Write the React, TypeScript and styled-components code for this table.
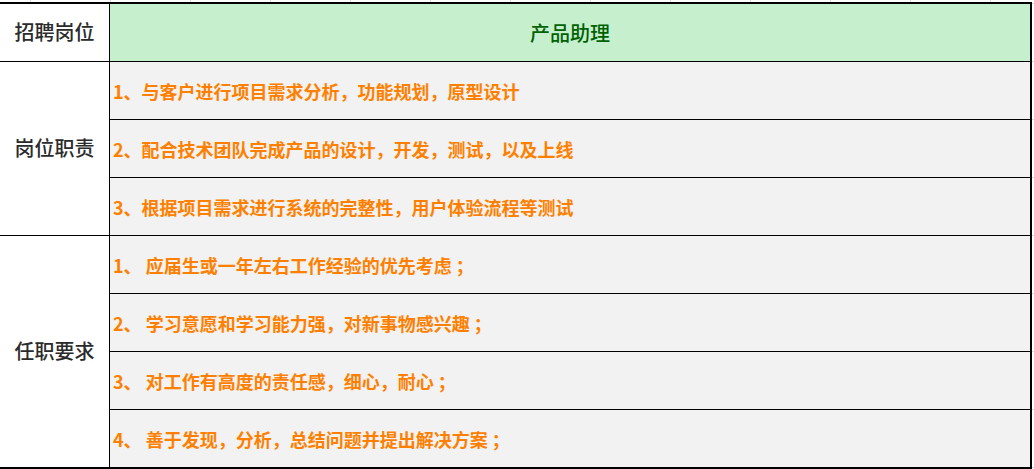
import React, { FC } from 'react'
import styled, { createGlobalStyle } from 'styled-components'

const GlobalStyle = createGlobalStyle`
  html, body {
    margin: 0;
    padding: 0;
  }
  body {
    width: 1034px;
    height: 469px;
    overflow: hidden;
    background-color: #fff;
    background-image:
      repeating-linear-gradient(to right, transparent 0 30px, #dadada 30px 31px, transparent 31px 80px),
      repeating-linear-gradient(to bottom, transparent 0 3px, #dadada 3px 4px, transparent 4px 58px);
  }
`

const Sheet = styled.div`
  margin-top: 2px;
  width: 1032px;
  box-sizing: border-box;
  border-top: 2px solid #000;
  border-right: 2px solid #000;
  border-bottom: 2px solid #000;
  background: #fff;
`

const Row = styled.div`
  display: grid;
  grid-template-columns: 110px 1fr;
  border-bottom: 1px solid #000;

  &:last-child {
    border-bottom: none;
  }
`

const Label = styled.div`
  box-sizing: border-box;
  border-right: 1px solid #000;
  display: flex;
  align-items: center;
  justify-content: center;
  font-family: 'Noto Sans CJK SC', sans-serif;
  font-size: 20px;
  font-weight: 500;
  color: #2b2b2b;
  padding-bottom: 2px;
`

const Title = styled.div`
  height: 57px;
  display: flex;
  align-items: center;
  justify-content: center;
  background: #c6efce;
  color: #006100;
  font-family: 'Noto Sans CJK SC', sans-serif;
  font-size: 20px;
  font-weight: 500;
`

const Items = styled.div`
  display: flex;
  flex-direction: column;
`

const Item = styled.div`
  height: 57px;
  display: flex;
  align-items: center;
  padding-left: 3px;
  background: #f2f2f2;
  border-bottom: 1px solid #000;
  color: #ff8000;
  font-family: 'Noto Sans CJK SC', sans-serif;
  font-size: 18px;
  font-weight: 700;
  white-space: pre;

  &:last-child {
    border-bottom: none;
  }
`

const sections = [
  {
    label: '岗位职责',
    items: [
      '1、与客户进行项目需求分析，功能规划，原型设计',
      '2、配合技术团队完成产品的设计，开发，测试，以及上线',
      '3、根据项目需求进行系统的完整性，用户体验流程等测试',
    ],
  },
  {
    label: '任职要求',
    items: [
      '1、 应届生或一年左右工作经验的优先考虑 ；',
      '2、 学习意愿和学习能力强，对新事物感兴趣 ；',
      '3、 对工作有高度的责任感，细心，耐心 ；',
      '4、 善于发现，分析，总结问题并提出解决方案 ；',
    ],
  },
]

const App: FC = () => {
  return (
    <>
      <GlobalStyle />
      <Sheet>
        <Row>
          <Label>招聘岗位</Label>
          <Title>产品助理</Title>
        </Row>
        {sections.map((s) => (
          <Row key={s.label}>
            <Label>{s.label}</Label>
            <Items>
              {s.items.map((t) => (
                <Item key={t}>{t}</Item>
              ))}
            </Items>
          </Row>
        ))}
      </Sheet>
    </>
  )
}

export default App
